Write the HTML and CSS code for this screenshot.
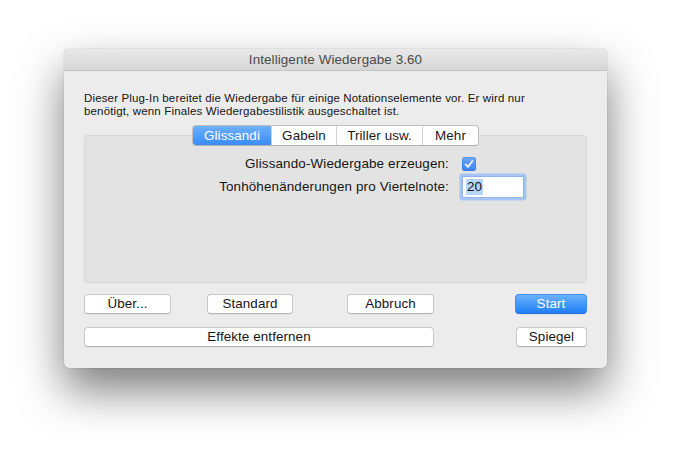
FILE: index.html
```html
<!DOCTYPE html>
<html lang="de">
<head>
<meta charset="utf-8">
<title>Intelligente Wiedergabe 3.60</title>
<link rel="stylesheet" href="styles.css">
</head>
<body>
<div class="window">
  <div class="titlebar">Intelligente Wiedergabe 3.60</div>
  <div class="content">
    <p class="desc">Dieser Plug-In bereitet die Wiedergabe für einige Notationselemente vor. Er wird nur<br>benötigt, wenn Finales Wiedergabestilistik ausgeschaltet ist.</p>
    <div class="tabs">
      <span class="tab tab-gliss active">Glissandi</span>
      <span class="tab tab-gabeln">Gabeln</span>
      <span class="tab tab-triller">Triller usw.</span>
      <span class="tab tab-mehr">Mehr</span>
    </div>
    <div class="box">
      <div class="form">
        <span class="lbl">Glissando-Wiedergabe erzeugen:</span>
        <span class="ctrl"><span class="checkbox"><svg width="14" height="14" viewBox="0 0 14 14"><path d="M3.6 7.4 L6 9.9 L10.4 3.9" fill="none" stroke="#fff" stroke-width="1.7" stroke-linecap="round" stroke-linejoin="round"/></svg></span></span>
        <span class="lbl">Tonhöhenänderungen pro Viertelnote:</span>
        <span class="ctrl"><span class="field"><span class="sel">20</span></span></span>
      </div>
    </div>
    <div class="row row1">
      <button class="btn b-ueber">Über...</button>
      <button class="btn b-standard">Standard</button>
      <button class="btn b-abbruch">Abbruch</button>
      <button class="btn primary b-start">Start</button>
    </div>
    <div class="row row2">
      <button class="btn b-effekte">Effekte entfernen</button>
      <button class="btn b-spiegel">Spiegel</button>
    </div>
  </div>
</div>
</body>
</html>
```
FILE: styles.css
```css
html, body {
  margin: 0;
  padding: 0;
  background: #ffffff;
}
body {
  width: 697px;
  height: 455px;
  overflow: hidden;
  font-family: "Liberation Sans", Arial, sans-serif;
  color: #1e1e1e;
}
.window {
  margin: 49px 0 0 64px;
  width: 543px;
  height: 319px;
  background: #ececec;
  border-radius: 5px;
  box-shadow: 0 22px 46px rgba(0,0,0,0.52), 0 0 1px rgba(0,0,0,0.45);
  display: flex;
  flex-direction: column;
  overflow: hidden;
}
.titlebar {
  height: 21px;
  flex: none;
  border-bottom: 1px solid #c4c4c4;
  background: linear-gradient(#e9e9e9, #d6d6d6);
  text-align: center;
  font-size: 13.4px;
  line-height: 22px;
  color: #4a4a4a;
  letter-spacing: 0.1px;
}
.content {
  padding: 21px 20px 0 20px;
  display: flex;
  flex-direction: column;
}
.desc {
  margin: 0;
  font-size: 11.5px;
  letter-spacing: 0.15px;
  line-height: 13px;
  color: #151515;
  height: 26px;
  white-space: nowrap;
}
.tabs {
  margin-top: 7px;
  align-self: center;
  display: flex;
  height: 19px;
  border: 1px solid #bfbfbf;
  border-bottom-color: #b0b0b0;
  border-radius: 4px;
  background: #ffffff;
  position: relative;
  z-index: 1;
  overflow: hidden;
  font-size: 13.4px;
  line-height: 19px;
  letter-spacing: 0.1px;
}
.tab {
  text-align: center;
  border-left: 1px solid #d2d2d2;
  color: #1a1a1a;
}
.tab:first-child { border-left: none; }
.tab.active {
  background: linear-gradient(#6db1fb, #3a8bf8);
  color: #ffffff;
}
.tab-gliss { width: 78px; }
.tab-gabeln { width: 64px; }
.tab-triller { width: 85px; }
.tab-mehr { width: 55px; }
.box {
  margin-top: -11px;
  border: 1px solid #d8d8d8;
  border-radius: 3px;
  background: #e3e3e3;
  padding-top: 20px;
  box-sizing: content-box;
  height: 126px;
}
.form {
  display: grid;
  grid-template-columns: 364px auto;
  grid-template-rows: 16px 22px;
  column-gap: 13px;
  row-gap: 4px;
  align-items: center;
  font-size: 13.4px;
  letter-spacing: 0.15px;
}
.lbl {
  text-align: right;
  color: #151515;
  line-height: 16px;
}
.ctrl { display: flex; align-items: center; }
.checkbox {
  width: 14px;
  height: 14px;
  border-radius: 3px;
  background: linear-gradient(#6aa9fb, #3b82f6);
  box-shadow: inset 0 0 0 0.5px rgba(0,60,160,0.3);
  display: flex;
}
.field {
  width: 57px;
  height: 20px;
  background: #ffffff;
  border: 1px solid #8fb3ea;
  box-shadow: 0 0 0 2.5px #a6c5f4;
  border-radius: 1px;
  padding-left: 3px;
  display: flex;
  align-items: center;
  line-height: 16px;
}
.sel {
  background: #b4d5fe;
  color: #111;
  padding: 0 1px;
}
.row {
  display: flex;
}
.row1 { margin-top: 11px; }
.row2 { margin-top: 13px; }
.btn {
  height: 20px;
  padding: 0;
  margin: 0;
  font-family: "Liberation Sans", Arial, sans-serif;
  font-size: 13.4px;
  letter-spacing: 0.1px;
  line-height: 18px;
  color: #151515;
  background: #ffffff;
  border: 1px solid #c8c8c8;
  border-bottom-color: #b4b4b4;
  border-radius: 4px;
  box-shadow: 0 0.5px 0.5px rgba(0,0,0,0.08);
  text-align: center;
}
.btn.primary {
  background: linear-gradient(#6cb1fb, #1f7ff9);
  border-color: #3d8cf5;
  border-bottom-color: #2a6fe0;
  color: #ffffff;
}
.b-ueber { width: 87px; }
.b-standard { width: 86px; margin-left: 36px; }
.b-abbruch { width: 87px; margin-left: 54px; }
.b-start { width: 72px; margin-left: 81px; }
.b-effekte { width: 350px; }
.b-spiegel { width: 71px; margin-left: auto; }
```
